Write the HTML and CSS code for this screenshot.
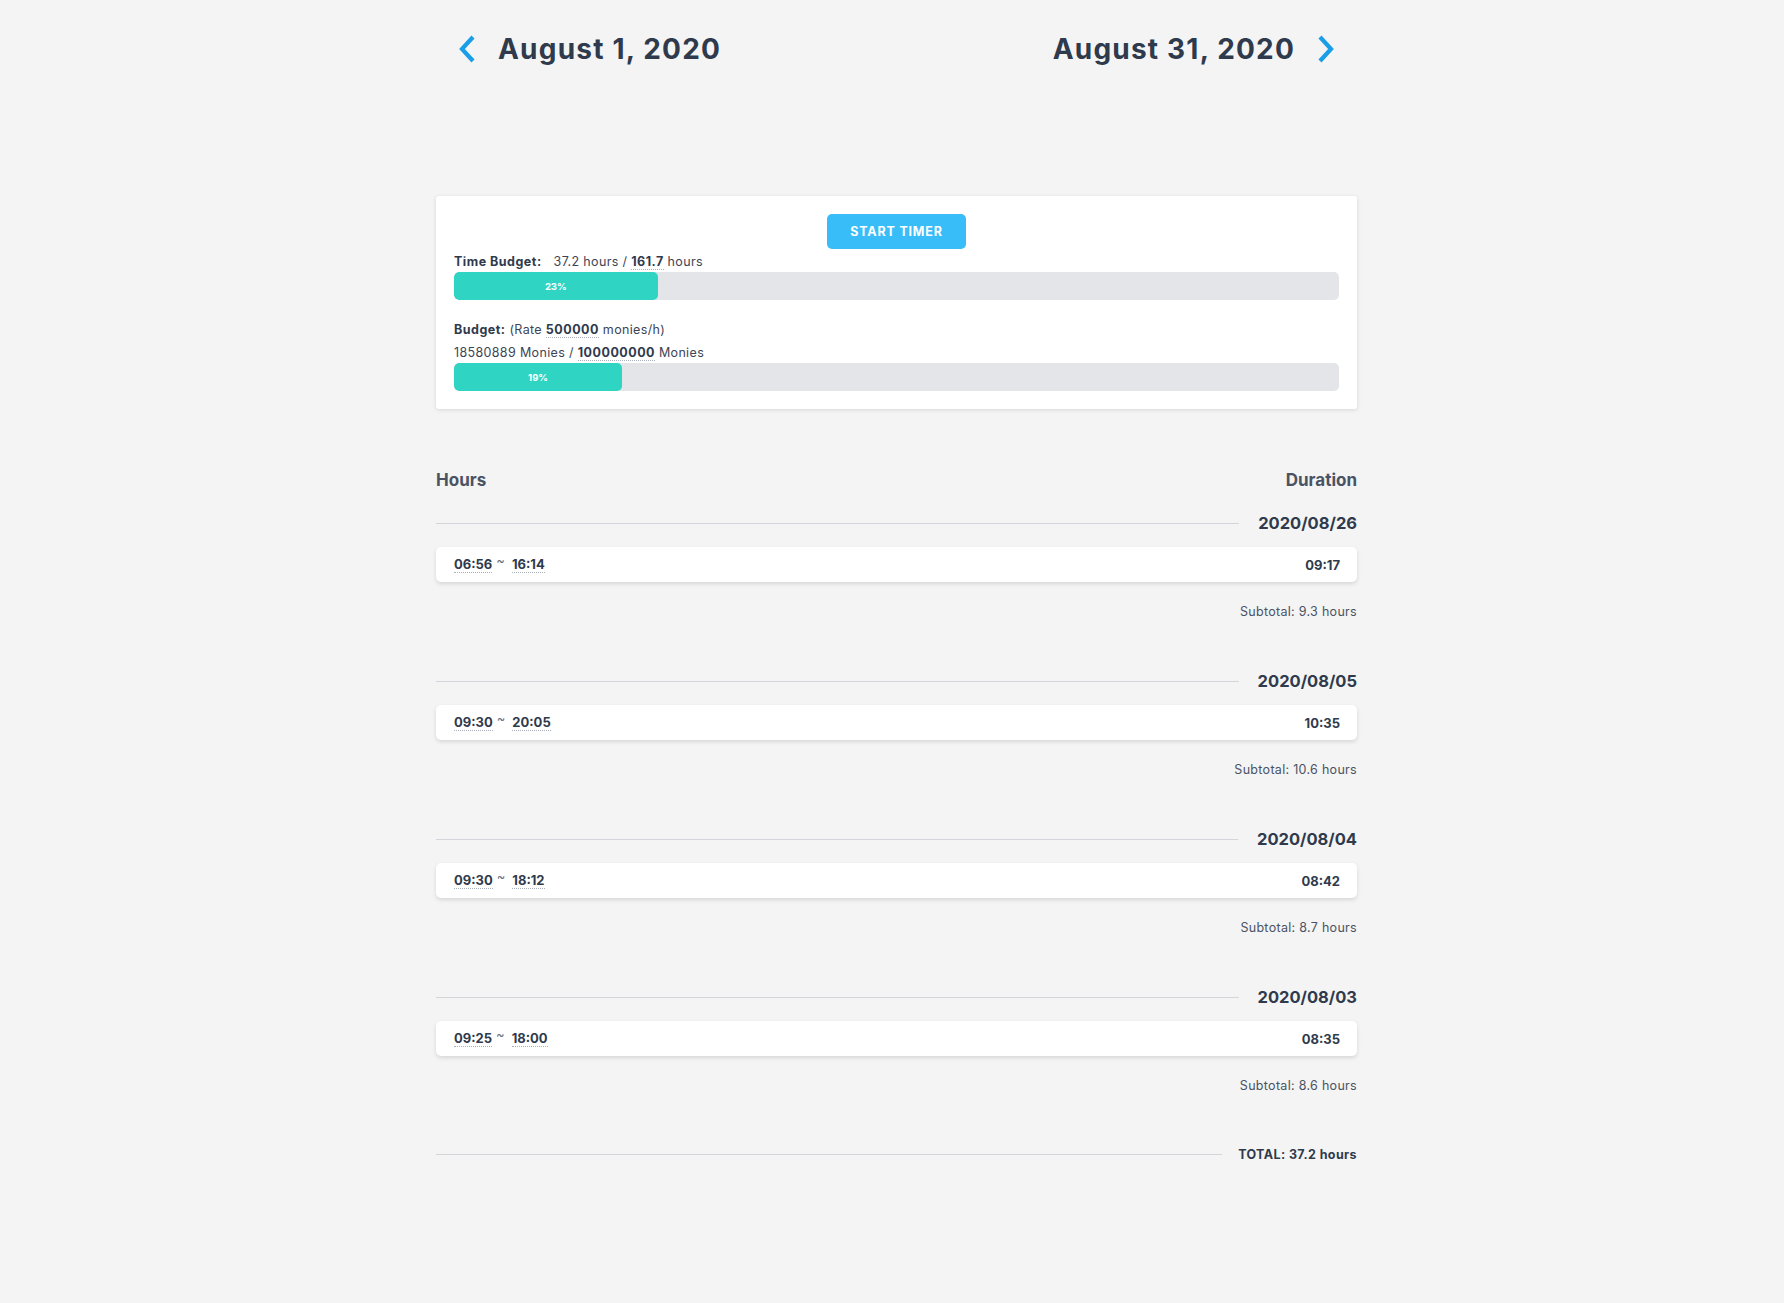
FILE: index.html
```html
<!DOCTYPE html>
<html lang="en">
<head>
<meta charset="utf-8">
<title>Hours</title>
<link rel="stylesheet" href="styles.css">
</head>
<body>
<div class="page">
  <header class="range">
    <div class="range-side">
      <a class="chev" href="#" aria-label="Previous">
        <svg width="20" height="30" viewBox="0 0 20 30"><polyline points="16,3 5,15 16,27" fill="none" stroke="#1a9ee8" stroke-width="4.2" stroke-linecap="butt" stroke-linejoin="miter"/></svg>
      </a>
      <h1 class="range-date">August 1, 2020</h1>
    </div>
    <div class="range-side">
      <h1 class="range-date">August 31, 2020</h1>
      <a class="chev" href="#" aria-label="Next">
        <svg width="20" height="30" viewBox="0 0 20 30"><polyline points="4,3 15,15 4,27" fill="none" stroke="#1a9ee8" stroke-width="4.2" stroke-linecap="butt" stroke-linejoin="miter"/></svg>
      </a>
    </div>
  </header>

  <section class="card">
    <div class="card-actions"><button class="btn">START TIMER</button></div>
    <div class="meta"><b>Time Budget:</b><span class="gap"></span>37.2 hours / <b class="dot">161.7</b> hours</div>
    <div class="track"><div class="fill" style="width:23%">23%</div></div>
    <div class="meta meta-first"><b>Budget:</b> (Rate <b class="dot">500000</b> monies/h)</div>
    <div class="meta">18580889 Monies / <b class="dot">100000000</b> Monies</div>
    <div class="track"><div class="fill" style="width:19%">19%</div></div>
  </section>

  <div class="list-head">
    <span>Hours</span>
    <span>Duration</span>
  </div>

  <section class="day">
    <div class="day-head"><span class="rule"></span><span class="day-date">2020/08/26</span></div>
    <div class="entry">
      <div class="times"><span class="dot">06:56</span><span class="tilde">~</span><span class="dot">16:14</span></div>
      <div class="dur">09:17</div>
    </div>
    <div class="subtotal">Subtotal: 9.3 hours</div>
  </section>

  <section class="day">
    <div class="day-head"><span class="rule"></span><span class="day-date">2020/08/05</span></div>
    <div class="entry">
      <div class="times"><span class="dot">09:30</span><span class="tilde">~</span><span class="dot">20:05</span></div>
      <div class="dur">10:35</div>
    </div>
    <div class="subtotal">Subtotal: 10.6 hours</div>
  </section>

  <section class="day">
    <div class="day-head"><span class="rule"></span><span class="day-date">2020/08/04</span></div>
    <div class="entry">
      <div class="times"><span class="dot">09:30</span><span class="tilde">~</span><span class="dot">18:12</span></div>
      <div class="dur">08:42</div>
    </div>
    <div class="subtotal">Subtotal: 8.7 hours</div>
  </section>

  <section class="day">
    <div class="day-head"><span class="rule"></span><span class="day-date">2020/08/03</span></div>
    <div class="entry">
      <div class="times"><span class="dot">09:25</span><span class="tilde">~</span><span class="dot">18:00</span></div>
      <div class="dur">08:35</div>
    </div>
    <div class="subtotal">Subtotal: 8.6 hours</div>
  </section>

  <div class="total"><span class="rule"></span><span class="total-text">TOTAL: 37.2 hours</span></div>
</div>
</body>
</html>
```

FILE: styles.css
```css
* { box-sizing: border-box; }
html, body {
  margin: 0;
  padding: 0;
  background: #f4f4f4;
}
body {
  font-family: Inter, "Open Sans", "Liberation Sans", sans-serif;
  color: #2f3a4d;
  padding-left: 9px;
}
.page {
  width: 921px;
  margin: 0 auto;
  padding-bottom: 120px;
}
.range {
  height: 98px;
  display: flex;
  align-items: center;
  justify-content: space-between;
  padding: 0 21px;
}
.range-side {
  display: flex;
  align-items: center;
  gap: 21px;
}
.chev { display: flex; }
.range-date {
  margin: 0;
  font-size: 28px;
  font-weight: 700;
  color: #2f3a4d;
  letter-spacing: 1.2px;
}
.card {
  margin-top: 98px;
  background: #fff;
  border-radius: 3px;
  box-shadow: 0 1px 4px rgba(0,0,0,0.12);
  padding: 18px;
}
.card-actions {
  display: flex;
  justify-content: center;
}
.btn {
  width: 139px;
  height: 35px;
  border: 0;
  border-radius: 5px;
  background: #38bdf8;
  color: #fff;
  font-family: inherit;
  font-weight: 700;
  font-size: 12.5px;
  letter-spacing: 0.8px;
}
.meta {
  font-size: 12.5px;
  line-height: 20px;
  margin-top: 3px;
  margin-bottom: 0;
  color: #3c4556;
  letter-spacing: 0.35px;
}
.meta b { color: #2f3a4d; font-weight: 700; letter-spacing: 0.5px; }
.meta-first { margin-top: 20px; margin-bottom: 3px; }
.gap { display: inline-block; width: 12px; }
.dot { border-bottom: 1px dotted #a9b1bd; }
.track {
  height: 28px;
  background: #e4e5e9;
  border-radius: 5px;
  overflow: hidden;
}
.fill {
  height: 100%;
  background: #2fd4c2;
  border-radius: 5px;
  color: #fff;
  font-size: 9.5px;
  font-weight: 700;
  display: flex;
  align-items: center;
  justify-content: center;
}
.list-head {
  margin-top: 59px;
  display: flex;
  justify-content: space-between;
  font-size: 17px;
  line-height: 24px;
  font-weight: 700;
  color: #4a5364;
}
.day { margin-top: 44px; }
.list-head + .day { margin-top: 16px; }
.day-head {
  height: 30px;
  display: flex;
  align-items: center;
  gap: 19px;
}
.rule {
  flex: 1;
  height: 1px;
  background: #d3d5da;
}
.day-date {
  font-size: 16.5px;
  font-weight: 700;
  color: #2f3a4d;
}
.entry {
  margin-top: 9px;
  height: 35px;
  background: #fff;
  border-radius: 5px;
  box-shadow: 0 2px 4px rgba(0,0,0,0.12);
  display: flex;
  align-items: center;
  justify-content: space-between;
  padding: 0 17px 0 18px;
  font-size: 13px;
  font-weight: 700;
  color: #2f3a4d;
}
.times { display: flex; align-items: center; }
.tilde {
  font-size: 13px;
  font-weight: 400;
  color: #6b7280;
  margin: 0 7px 0 4px;
  position: relative;
  top: -5px;
}
.subtotal {
  margin-top: 20px;
  text-align: right;
  font-size: 12.5px;
  line-height: 20px;
  color: #4a5364;
  letter-spacing: 0.3px;
}
.total {
  margin-top: 48px;
  height: 20px;
  display: flex;
  align-items: center;
  gap: 16px;
}
.total-text {
  font-size: 12.5px;
  font-weight: 700;
  color: #2f3a4d;
  letter-spacing: 0.4px;
}
```
